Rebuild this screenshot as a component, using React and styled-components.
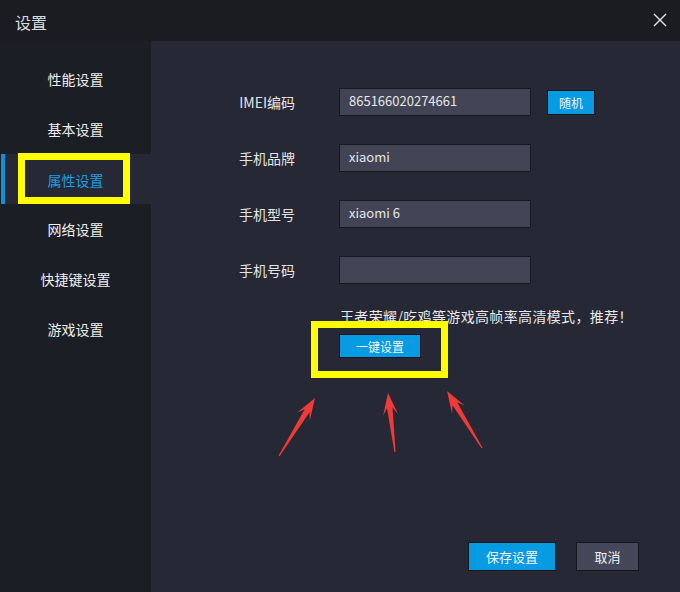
import React from "react";
import styled, { createGlobalStyle } from "styled-components";

const GlobalStyle = createGlobalStyle`
    html, body {
        margin:0;
        padding:0;
        background:#1b1d24;
    }
    * {
        box-sizing:border-box;
    }
`

const menu = ["性能设置", "基本设置", "属性设置", "网络设置", "快捷键设置", "游戏设置"];

const fields = [
    { label: "IMEI编码", value: "865166020274661", random: true },
    { label: "手机品牌", value: "xiaomi" },
    { label: "手机型号", value: "xiaomi 6" },
    { label: "手机号码", value: "" },
];

// red hand-drawn style arrows, coords relative to the content panel
const arrows = [
    { tail: [128, 415], tip: [164, 357] },
    { tail: [244, 411], tip: [237, 352] },
    { tail: [331, 407], tip: [296, 350] },
];

function arrowPoints(tail, tip) {
    const dx = tip[0] - tail[0];
    const dy = tip[1] - tail[1];
    const len = Math.hypot(dx, dy);
    const ux = dx / len, uy = dy / len;
    const nx = -uy, ny = ux;
    const at = (d, w) => [tip[0] - ux * d + nx * w, tip[1] - uy * d + ny * w];
    const pts = [
        [tail[0] + nx * 0.6, tail[1] + ny * 0.6],
        at(15, 2.8),
        at(22, 7.5),
        tip,
        at(22, -7.5),
        at(15, -2.8),
        [tail[0] - nx * 0.6, tail[1] - ny * 0.6],
    ];
    return pts.map(p => p[0].toFixed(1) + "," + p[1].toFixed(1)).join(" ");
}

function App() {
    return (
        <Window>
            <GlobalStyle />
            <TitleBar>
                <Title>设置</Title>
                <Close>
                    <svg width="14" height="14" viewBox="0 0 14 14">
                        <path d="M1 1 L13 13 M13 1 L1 13" stroke="#e6e6e6" strokeWidth="1.4" fill="none" />
                    </svg>
                </Close>
            </TitleBar>
            <Body>
                <Sidebar>
                    {menu.map((m, i) => (
                        <MenuItem key={m} active={i === 2}>
                            {m}
                            {i === 2 && <Highlight />}
                        </MenuItem>
                    ))}
                </Sidebar>
                <Content>
                    <Form>
                        {fields.map(f => (
                            <Row key={f.label}>
                                <Label>{f.label}</Label>
                                <Input>{f.value}</Input>
                                {f.random && <SmallButton>随机</SmallButton>}
                            </Row>
                        ))}
                    </Form>
                    <Hint>王者荣耀/吃鸡等游戏高帧率高清模式，推荐！</Hint>
                    <OneKey>一键设置</OneKey>
                    <Footer>
                        <Button primary>保存设置</Button>
                        <Button>取消</Button>
                    </Footer>
                    <BoxMark />
                    <Arrows width="529" height="551" viewBox="0 0 529 551">
                        {arrows.map((a, i) => (
                            <polygon key={i} points={arrowPoints(a.tail, a.tip)} fill="#f03a3a" />
                        ))}
                    </Arrows>
                </Content>
            </Body>
        </Window>
    );
}

export default App;

const Window = styled.div`
    width:680px;
    height:592px;
    background:#1b1d24;
    display:flex;
    flex-direction:column;
    font-family:"Noto Sans CJK SC", "Noto Sans", sans-serif;
    color:#e8e8ea;
    overflow:hidden;
`
const TitleBar = styled.div`
    height:41px;
    display:flex;
    align-items:center;
    justify-content:space-between;
    padding:0 13px 0 15px;
    background:#1a1c22;
`
const Title = styled.div`
    font-size:16px;
    line-height:20px;
    color:#dcdcde;
    margin-top:2px;
`
const Close = styled.div`
    width:14px;
    height:14px;
    display:flex;
    margin-top:-1px;
`
const Body = styled.div`
    flex:1;
    display:flex;
`
const Sidebar = styled.div`
    width:151px;
    background:#1c1e26;
    padding-top:13px;
    display:flex;
    flex-direction:column;
`
const MenuItem = styled.div`
    position:relative;
    height:50px;
    display:flex;
    align-items:center;
    justify-content:center;
    font-size:14px;
    color:${p => p.active ? "#1c9ee2" : "#eeeeef"};
    background:${p => p.active ? "#262835" : "transparent"};
    border-left:${p => p.active ? "4px solid #0f93d6" : "none"};
    margin-left:${p => p.active ? "1px" : "0"};
    padding-right:${p => p.active ? "5px" : "0"};
    padding-top:${p => p.active ? "2px" : "0"};
`
const Highlight = styled.div`
    position:absolute;
    left:13px;
    top:-1px;
    width:112px;
    height:51px;
    border:7px solid #ffff00;
`
const Content = styled.div`
    position:relative;
    flex:1;
    background:#262835;
    display:flex;
    flex-direction:column;
    padding:47px 41px 21px 188px;
`
const Form = styled.div`
    display:flex;
    flex-direction:column;
    gap:28px;
`
const Row = styled.div`
    display:flex;
    align-items:center;
    height:28px;
`
const Label = styled.div`
    width:100px;
    margin-left:-144px;
    margin-right:44px;
    text-align:right;
    font-size:14px;
    line-height:20px;
    color:#e4e4e6;
`
const Input = styled.div`
    width:192px;
    height:28px;
    background:#424455;
    border:1px solid #17181e;
    padding:0 9px;
    font-size:13px;
    line-height:24px;
    color:#e6e6e8;
`
const SmallButton = styled.div`
    margin-left:16px;
    width:48px;
    height:25px;
    background:#079be3;
    border:1px solid #12151c;
    display:flex;
    align-items:center;
    justify-content:center;
    font-size:12px;
    color:#f2f2f2;
`
const Hint = styled.div`
    margin-top:22px;
    margin-left:1px;
    font-size:14px;
    line-height:20px;
    letter-spacing:0.35px;
    color:#e8e8ea;
    white-space:nowrap;
`
const OneKey = styled.div`
    margin-top:8px;
    width:82px;
    height:24px;
    background:#079be3;
    border:1px solid #12151c;
    display:flex;
    align-items:center;
    justify-content:center;
    font-size:12px;
    color:#f4f4f4;
`
const Footer = styled.div`
    margin-top:auto;
    display:flex;
    justify-content:flex-end;
    gap:20px;
`
const Button = styled.div`
    width:${p => p.primary ? "88px" : "63px"};
    height:29px;
    background:${p => p.primary ? "#079be3" : "#44465a"};
    border:1px solid #15171d;
    display:flex;
    align-items:center;
    justify-content:center;
    font-size:13px;
    color:#f2f2f4;
`
const BoxMark = styled.div`
    position:absolute;
    left:160px;
    top:280px;
    width:137px;
    height:57px;
    border:7px solid #ffff00;
    pointer-events:none;
`
const Arrows = styled.svg`
    position:absolute;
    left:0;
    top:0;
    pointer-events:none;
`
